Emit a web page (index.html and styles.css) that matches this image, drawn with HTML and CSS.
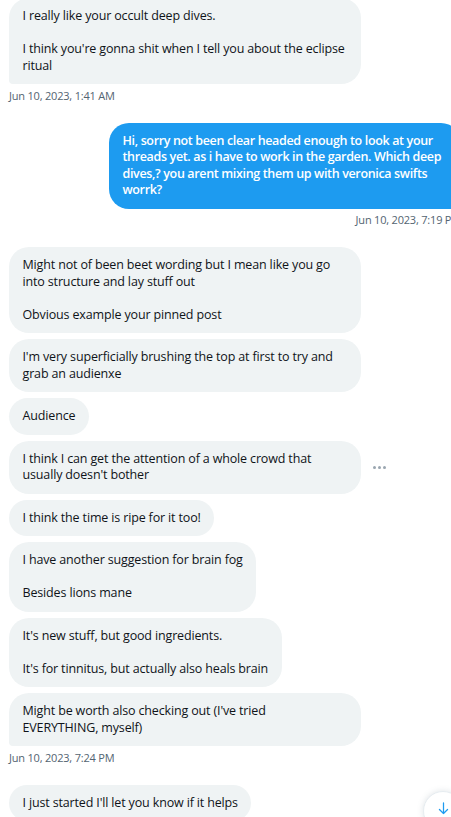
FILE: index.html
```html
<!DOCTYPE html>
<html lang="en">
<head>
<meta charset="utf-8">
<title>Messages</title>
<link rel="stylesheet" href="styles.css">
</head>
<body>
<main class="thread">
  <section class="group in">
    <div class="bubble in last">I really like your occult deep dives.<br><br>I think you're gonna shit when I tell you about the eclipse ritual</div>
    <div class="stamp">Jun 10, 2023, 1:41 AM</div>
  </section>

  <section class="group out">
    <div class="bubble out last">Hi, sorry not been clear headed enough to look at your threads yet. as i have to work in the garden. Which deep dives,? you arent mixing them up with veronica swifts worrk?</div>
    <div class="stamp">Jun 10, 2023, 7:19 PM</div>
  </section>

  <section class="group in">
    <div class="bubble in">Might not of been beet wording but I mean like you go into structure and lay stuff out<br><br>Obvious example your pinned post</div>
    <div class="bubble in">I'm very superficially brushing the top at first to try and grab an audienxe</div>
    <div class="bubble in">Audience</div>
    <div class="row">
      <div class="bubble in">I think I can get the attention of a whole crowd that usually doesn't bother</div>
      <span class="more"><i></i><i></i><i></i></span>
    </div>
    <div class="bubble in">I think the time is ripe for it too!</div>
    <div class="bubble in">I have another suggestion for brain fog<br><br>Besides lions mane</div>
    <div class="bubble in">It's new stuff, but good ingredients.<br><br>It's for tinnitus, but actually also heals brain</div>
    <div class="bubble in last wide">Might be worth also checking out (I've tried<br>EVERYTHING, myself)</div>
    <div class="stamp">Jun 10, 2023, 7:24 PM</div>
  </section>

  <section class="group in">
    <div class="bubble in">I just started I'll let you know if it helps</div>
  </section>
</main>

<button class="scroll-down" aria-label="Scroll to bottom">
  <svg viewBox="0 0 24 24" width="15" height="15"><path d="M12 3v17M5.5 13.5 12 20l6.5-6.5" fill="none" stroke="#1d9bf0" stroke-width="2" stroke-linecap="round" stroke-linejoin="round"/></svg>
</button>
</body>
</html>
```

FILE: styles.css
```css
* { box-sizing: border-box; }

html, body {
  margin: 0;
  padding: 0;
  background: #ffffff;
  overflow: hidden;
}

body {
  font-family: "Open Sans", "Noto Sans", "Liberation Sans", sans-serif;
  color: #0f1419;
  font-size: 12.5px;
  line-height: 16.5px;
  height: 817px;
}

.thread {
  width: 452px;
  margin: -2px 0 0 9px;
  display: flex;
  flex-direction: column;
  gap: 20px;
}

.group {
  display: flex;
  flex-direction: column;
  gap: 6px;
}

.group.in { align-items: flex-start; }
.group.out { align-items: flex-end; }

.bubble {
  max-width: 352px;
  padding: 10px 13.5px;
  border-radius: 20px;
  letter-spacing: -0.15px;
}

.bubble.wide { width: 352px; }

.bubble.in {
  background: #eff3f4;
  color: #0f1419;
}

.bubble.in.last { border-bottom-left-radius: 4px; }

.bubble.out {
  background: #1d9bf0;
  color: #ffffff;
  font-weight: 600;
  width: 352px;
  letter-spacing: -0.35px;
}

.bubble.out.last { border-bottom-right-radius: 4px; }

.stamp {
  margin-top: -1.5px;
  font-size: 11px;
  line-height: 14px;
  color: #536471;
  letter-spacing: -0.2px;
}

.row {
  display: flex;
  align-items: center;
}

.more {
  display: flex;
  gap: 2px;
  margin-left: 12px;
}

.more i {
  width: 3px;
  height: 3px;
  border-radius: 50%;
  background: #9aa6b0;
}

.scroll-down {
  position: fixed;
  left: 423px;
  top: 791px;
  width: 40px;
  height: 40px;
  border-radius: 50%;
  border: 1px solid #e6ecf0;
  background: #ffffff;
  box-shadow: 0 0 6px rgba(101, 119, 134, 0.2);
  display: flex;
  align-items: center;
  justify-content: center;
  padding: 0;
  padding-bottom: 6px;
}
```
